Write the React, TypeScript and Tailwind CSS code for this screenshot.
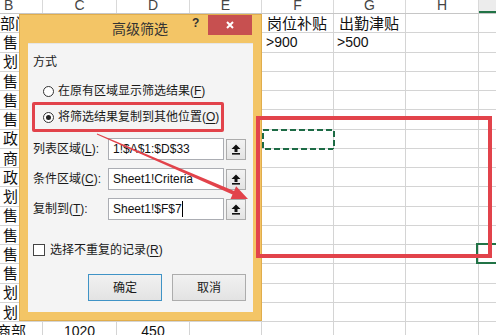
import { ReactNode } from 'react'

const LETTERS = ['B', 'C', 'D', 'E', 'F', 'G', 'H', 'I']
const WIDTHS = ['w-[43px]', 'w-[74px]', 'w-[73px]', 'w-[72px]', 'w-[72px]', 'w-[72px]', 'w-[73px]', 'w-[40px]']

// what is still visible of column B, left of the dialog
const leftText = ['部门', '售', '划', '售', '售', '售', '政', '商', '政', '划', '售', '售', '售', '售', '划', '划', '商部']

const cellContent = (r: number, c: number): ReactNode => {
  if (c === 0) {
    if (r === 0) return <span className='text-[15px] mt-[2px]'>{leftText[r]}</span>
    if (r === 16) return <span className='text-[15px] mt-[2px] ml-[-4px]'>{leftText[r]}</span>
    return <span className='text-[15px] mt-[2px] pl-[3px]'>{leftText[r]}</span>
  }
  if (r === 0 && c === 4) return <span className='text-[15px] mt-[2px] pl-[5px]'>岗位补贴</span>
  if (r === 0 && c === 5) return <span className='text-[15px] mt-[2px] pl-[5px]'>出勤津贴</span>
  if (r === 1 && c === 4) return <span className='text-[14px] mt-[1px] pl-[4px]'>&gt;900</span>
  if (r === 1 && c === 5) return <span className='text-[14px] mt-[1px] pl-[3px]'>&gt;500</span>
  if (r === 16 && c === 1) return <span className='w-full text-center text-[14px] mt-[1px]'>1020</span>
  if (r === 16 && c === 2) return <span className='w-full text-center text-[14px] mt-[1px]'>450</span>
  return null
}

const Sheet = () => (
  <div className="flex flex-col font-['Liberation_Sans','Noto_Sans_CJK_SC',sans-serif] text-[#111]">
    <div className='flex h-[14px] border-b border-[#c6c6c6] bg-white'>
      {LETTERS.map((l, i) => (
        <div
          key={l}
          className={`${WIDTHS[i]} shrink-0 border-r border-[#d9d9d9] text-center text-[14px] leading-[10px] ${i === 7 ? 'bg-[#ececec] text-[#217346] shadow-[inset_0_-2px_0_#217346]' : 'text-[#444]'} ${i === 0 ? 'text-left indent-[4px]' : ''}`}
        >
          {l}
        </div>
      ))}
    </div>
    {leftText.map((_, r) => (
      <div key={r} className='flex h-[19.25px]'>
        {LETTERS.map((l, c) => (
          <div key={l} className={`${WIDTHS[c]} relative shrink-0 flex items-center overflow-visible whitespace-nowrap border-r border-b border-[#d4d4d4]`}>
            {cellContent(r, c)}
            {r === 6 && c === 4 && (
              <svg className='absolute left-[0px] top-[-1px]' width='73' height='21' viewBox='0 0 73 21'>
                <rect x='1' y='1' width='71' height='19' fill='none' stroke='#1d6b45' strokeWidth='2' strokeDasharray='6 3' />
              </svg>
            )}
            {r === 12 && c === 7 && <div className='absolute left-[-3px] top-[-2px] w-[30px] h-[21px] border-2 border-[#217346]' />}
          </div>
        ))}
      </div>
    ))}
  </div>
)

const Radio = ({ checked }: { checked?: boolean }) => (
  <span className='w-[11px] h-[11px] shrink-0 rounded-full border border-[#333] bg-white flex items-center justify-center'>
    {checked && <span className='w-[5px] h-[5px] rounded-full bg-[#222]' />}
  </span>
)

const PickIcon = () => (
  <svg width='10' height='11' viewBox='0 0 10 11'>
    <path d='M5 0.5 L0.5 5 H3.5 V8 H6.5 V5 H9.5 Z' fill='#111' />
    <rect x='1' y='9' width='8' height='1.6' fill='#111' />
  </svg>
)

const RefRow = ({ label, k, value, cursor, className }: { label: string; k: string; value: string; cursor?: boolean; className: string }) => (
  <div className={`flex items-center h-[22px] ${className}`}>
    <span className='w-[75px] text-[12px]'>
      {label}(<span className='underline underline-offset-2'>{k}</span>):
    </span>
    <div className='w-[116px] h-[22px] border border-[#abadb3] bg-white flex items-center pl-[4px] overflow-hidden whitespace-nowrap text-[12px] text-[#111]'>
      {value}
      {cursor && <span className='w-[1px] h-[16px] bg-black' />}
    </div>
    <div className='ml-[2px] w-[20px] h-[21px] border border-[#acacac] bg-gradient-to-b from-[#f2f2f2] to-[#e4e4e4] flex items-center justify-center'>
      <PickIcon />
    </div>
  </div>
)

const Dialog = () => (
  <div className="absolute left-[19px] top-[14px] w-[243px] h-[307px] border border-[#e0ad4c] bg-[#f3c566] flex flex-col font-['Liberation_Sans','Noto_Sans_CJK_SC',sans-serif] text-[#1a1a1a]">
    <div className='h-[28px] flex items-start pl-[92px]'>
      <span className='w-[56px] text-[14px] leading-[20px] mt-[4px] text-[#333]'>高级筛选</span>
      <span className='ml-[24px] w-[7px] mt-[1px] text-[12px] leading-[14px] font-bold text-[#333]'>?</span>
      <div className='ml-[9px] w-[44px] h-[20px] bg-[#c75050] flex items-center justify-center'>
        <svg width='8' height='8' viewBox='0 0 8 8'>
          <path d='M1 1 L7 7 M7 1 L1 7' stroke='white' strokeWidth='2' />
        </svg>
      </div>
    </div>
    <div className='mx-[8px] mb-[8px] flex-1 bg-[#f4f4f4] border-t border-[#e6e6e6] px-[5px] flex flex-col'>
      <span className='mt-[10px] h-[16px] text-[12px] leading-[16px]'>方式</span>
      <div className='mt-[13px] h-[16px] pl-[10px] flex items-center gap-[4px] text-[12px]'>
        <Radio />
        <span>
          在原有区域显示筛选结果(<span className='underline underline-offset-2'>F</span>)
        </span>
      </div>
      <div className='mt-[3px] ml-[-1px] w-[192px] h-[30px] border-[3px] border-[#e2434b] rounded-[2px] pl-[8px] flex items-center gap-[4px] text-[12px]'>
        <Radio checked />
        <span>
          将筛选结果复制到其他位置(<span className='underline underline-offset-2'>O</span>)
        </span>
      </div>
      <RefRow className='mt-[6px]' label='列表区域' k='L' value='1!$A$1:$D$33' />
      <RefRow className='mt-[8px]' label='条件区域' k='C' value='Sheet1!Criteria' />
      <RefRow className='mt-[8px]' label='复制到' k='T' value='Sheet1!$F$7' cursor />
      <div className='mt-[22px] h-[16px] flex items-center gap-[5px] text-[12px]'>
        <span className='w-[12px] h-[12px] border border-[#444] bg-white' />
        <span>
          选择不重复的记录(<span className='underline underline-offset-2'>R</span>)
        </span>
      </div>
      <div className='mt-[16px] flex justify-end gap-[10px] pr-[2px]'>
        <div className='w-[74px] h-[27px] border border-[#3f93c6] bg-gradient-to-b from-[#f1f1f1] to-[#e3e3e3] flex items-center justify-center text-[12px]'>确定</div>
        <div className='w-[74px] h-[27px] border border-[#acacac] bg-gradient-to-b from-[#f1f1f1] to-[#e3e3e3] flex items-center justify-center text-[12px]'>取消</div>
      </div>
    </div>
  </div>
)

const App = () => {
  return (
    <div className='relative w-[496px] h-[335px] overflow-hidden bg-white'>
      <Sheet />
      <Dialog />
      {/* annotations drawn on top of the screenshot */}
      <div className='absolute left-[256px] top-[116px] w-[236px] h-[142px] border-4 border-[#e2434b]' />
      <svg className='absolute left-0 top-0 pointer-events-none' width='496' height='335' viewBox='0 0 496 335'>
        <polygon
          points='97.2,133.5 234.1,190.9 236.1,186.3 248,199 230.5,199.1 232.5,194.5 96.8,134.5'
          fill='#e2434b'
        />
      </svg>
    </div>
  )
}

export default App
